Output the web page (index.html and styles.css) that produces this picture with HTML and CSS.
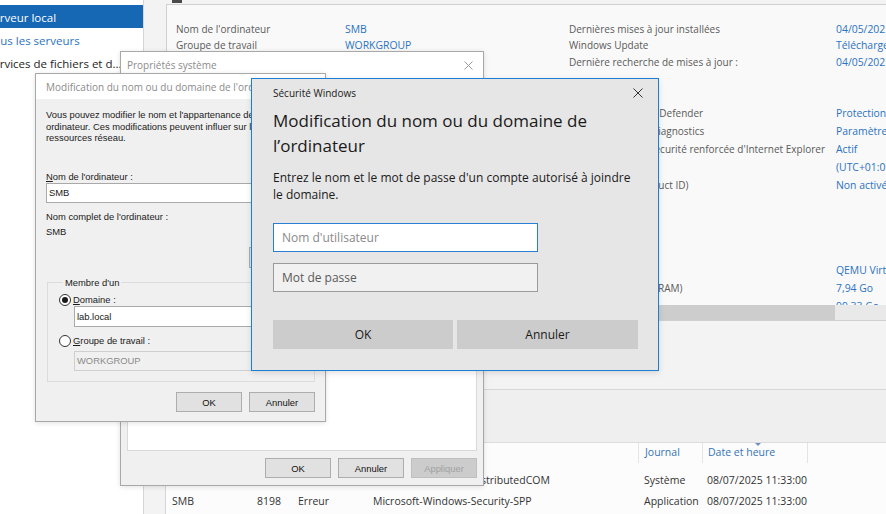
FILE: index.html
```html
<!DOCTYPE html>
<html lang="fr">
<head>
<meta charset="utf-8">
<title>Gestionnaire de serveur</title>
<link rel="stylesheet" href="styles.css">
</head>
<body>
<div class="desktop">
  <div class="sm">
    <nav class="nav">
      <div class="nav-item active">Serveur local</div>
      <div class="nav-item link">Tous les serveurs</div>
      <div class="nav-item">Services de fichiers et d...</div>
    </nav>
    <div class="main">
      <div class="topmark"></div>
      <section class="props">
        <div class="props-body">
          <div class="pgroup g1">
            <span class="lbl">Nom de l'ordinateur</span><span class="val">SMB</span><span class="lbl">Dernières mises à jour installées</span><span class="val">04/05/2025 10:12</span>
            <span class="lbl">Groupe de travail</span><span class="val">WORKGROUP</span><span class="lbl">Windows Update</span><span class="val">Télécharger les mises à jour uniquement</span>
            <span></span><span></span><span class="lbl">Dernière recherche de mises à jour :</span><span class="val">04/05/2025 10:12</span>
          </div>
          <div class="pgroup g2">
            <span class="lbl">Pare-feu Microsoft Defender</span><span class="val">Public : Actif</span><span class="lbl">Antivirus Microsoft Defender</span><span class="val">Protection en temps réel : Activée</span>
            <span class="lbl">Gestion à distance</span><span class="val">Activé</span><span class="lbl">Commentaires et diagnostics</span><span class="val">Paramètres</span>
            <span class="lbl">Bureau à distance</span><span class="val">Désactivé</span><span class="lbl">Configuration de sécurité renforcée d'Internet Explorer</span><span class="val">Actif</span>
            <span class="lbl">Association de cartes réseau</span><span class="val">Désactivé</span><span class="lbl">Fuseau horaire</span><span class="val">(UTC+01:00) Bruxelles, Copenhague, Madrid, Paris</span>
            <span class="lbl">Ethernet</span><span class="val">Adresse IPv4 attribuée par DHCP</span><span class="lbl">ID de produit (Product ID)</span><span class="val">Non activé</span>
          </div>
          <div class="pgroup g3">
            <span class="lbl">Système d'exploitation</span><span class="val">Microsoft Windows Server 2022</span><span class="lbl">Processeurs</span><span class="val">QEMU Virtual CPU version 2.5+</span>
            <span class="lbl">Informations sur le matériel</span><span class="val">QEMU Standard PC</span><span class="lbl">Mémoire installée (RAM)</span><span class="val">7,94 Go</span>
            <span></span><span></span><span class="lbl">Espace disque total</span><span class="val">99,33 Go</span>
          </div>
        </div>
        <div class="hscroll"><div class="hthumb"></div></div>
      </section>
      <section class="events">
        <div class="events-band"></div>
        <div class="etable">
          <div class="erow ehead">
            <span class="th first">Nom du serveur</span><span class="th num">ID</span><span class="th">Gravité</span><span class="th">Source</span><span class="th c-journal">Journal</span><span class="th c-date sorted">Date et heure</span><span class="th"></span>
          </div>
          <div class="erow">
            <span>SMB</span><span class="num">10016</span><span>Erreur</span><span>Microsoft-Windows-DistributedCOM</span><span class="c-journal">Système</span><span class="c-date">08/07/2025 11:33:00</span><span></span>
          </div>
          <div class="erow">
            <span>SMB</span><span class="num">8198</span><span>Erreur</span><span>Microsoft-Windows-Security-SPP</span><span class="c-journal">Application</span><span class="c-date">08/07/2025 11:33:00</span><span></span>
          </div>
        </div>
      </section>
    </div>
  </div>

  <!-- Propriétés système -->
  <div class="win win-props">
    <div class="tbar tbar-props">
      <span class="ttl">Propriétés système</span>
      <svg class="xicon" width="9" height="9" viewBox="0 0 9 9"><path d="M0.5 0.5L8.5 8.5M8.5 0.5L0.5 8.5" stroke="#9a9a9a" stroke-width="1" fill="none"/></svg>
    </div>
    <div class="props-wbody">
      <div class="tabpage"></div>
      <div class="cbtnrow">
        <button class="cbtn">OK</button>
        <button class="cbtn">Annuler</button>
        <button class="cbtn disabled">Appliquer</button>
      </div>
    </div>
  </div>

  <!-- Modification du nom ou du domaine -->
  <div class="win win-rename">
    <div class="tbar tbar-rename">
      <span class="ttl">Modification du nom ou du domaine de l'ordinateur</span>
    </div>
    <div class="rename-body">
      <p class="cpara">Vous pouvez modifier le nom et l'appartenance de cet<br>ordinateur. Ces modifications peuvent influer sur l'accès aux<br>ressources réseau.</p>
      <div class="clabel lbl-name"><u>N</u>om de l'ordinateur :</div>
      <div class="cinput in-name">SMB</div>
      <div class="clabel lbl-full">Nom complet de l'ordinateur :</div>
      <div class="clabel lbl-smb">SMB</div>
      <button class="cbtn btn-more">Autres...</button>
      <fieldset class="member">
        <legend>Membre d'un</legend>
        <div class="radio-row"><span class="radio on"></span><span class="clabel"><u>D</u>omaine :</span></div>
        <div class="cinput in-domain">lab.local</div>
        <div class="radio-row row2"><span class="radio"></span><span class="clabel"><u>G</u>roupe de travail :</span></div>
        <div class="cinput in-wg disabled">WORKGROUP</div>
      </fieldset>
      <div class="cbtnrow rename-btns">
        <button class="cbtn">OK</button>
        <button class="cbtn">Annuler</button>
      </div>
    </div>
  </div>

  <!-- Sécurité Windows -->
  <div class="win win-sec">
    <div class="sec-title">
      <span>Sécurité Windows</span>
      <svg class="xicon sec-x" width="10" height="10" viewBox="0 0 10 10"><path d="M0.5 0.5L9.5 9.5M9.5 0.5L0.5 9.5" stroke="#333" stroke-width="1" fill="none"/></svg>
    </div>
    <h1 class="sec-head">Modification du nom ou du domaine de<br>l’ordinateur</h1>
    <p class="sec-para">Entrez le nom et le mot de passe d'un compte autorisé à joindre<br>le domaine.</p>
    <div class="sec-input focus">Nom d'utilisateur</div>
    <div class="sec-input pwd">Mot de passe</div>
    <div class="sec-btns">
      <button class="sbtn ok">OK</button>
      <button class="sbtn cancel">Annuler</button>
    </div>
  </div>
</div>
</body>
</html>
```

FILE: styles.css
```css
* { box-sizing: border-box; }
html, body { margin: 0; padding: 0; }
body {
  width: 886px;
  height: 514px;
  overflow: hidden;
  background: #f3f3f3;
  font-family: "Open Sans", "Noto Sans", sans-serif;
}
.desktop { position: relative; width: 886px; height: 514px; overflow: hidden; }

/* ---------- Server manager background ---------- */
.sm { display: flex; height: 514px; }
.nav {
  width: 144px;
  flex: none;
  background: #fff;
  border-right: 1px solid #d6d6d6;
  padding-top: 5px;
  overflow: hidden;
}
.nav-item {
  height: 23px;
  padding-top: 2.5px;
  line-height: 20.5px;
  font-size: 11.5px;
  color: #1e1e1e;
  white-space: nowrap;
  margin-left: -13px;
}
.nav-item.active { background: #1667b4; color: #fff; }
.nav-item.link { color: #2d73be; }

.main { flex: 1; min-width: 0; overflow: hidden; background: #f3f3f3; }
.topmark { width: 10px; height: 3px; margin-left: 28px; background: #4a4a4a; }

.props {
  margin: 1px 0 0 22px;
  width: 900px;
  border: 1px solid #cfcfcf;
  background: #f9f9f9;
}
.props-body { height: 300px; overflow: hidden; padding: 15.5px 0 0 9px; }
.pgroup {
  display: grid;
  grid-template-columns: 169px 224px 267px 400px;
  font-size: 10px;
}
.g1 { grid-auto-rows: 16.5px; line-height: 16.5px; }
.g2, .g3 { grid-auto-rows: 18px; line-height: 18px; }
.g2 { margin-top: 34px; }
.g3 { margin-top: 67px; }
.lbl { color: #5a5a5a; white-space: nowrap; }
.val { color: #2b73c2; white-space: nowrap; font-size: 10.4px; }

.hscroll { height: 15px; background: #e9e9e9; }
.hthumb { width: 668px; height: 15px; background: #cdcdcd; }

.events { margin: 68px 0 0 21px; }
.events-band {
  height: 54px;
  background: #efefef;
  border-top: 1px solid #d6d6d6;
  border-bottom: 1px solid #dcdcdc;
}
.etable {
  height: 80px;
  background: #fcfcfc;
  border-left: 1px solid #d6d6d6;
  padding-left: 6px;
  font-size: 10.5px;
  color: #333;
}
.erow {
  display: grid;
  grid-template-columns: 68px 58px 75px 265px 64px 105px 1fr;
  height: 21px;
  line-height: 21px;
  white-space: nowrap;
}
.erow .num { text-align: right; padding-right: 17px; }
.erow .c-journal { padding-left: 6px; }
.erow .c-date { padding-left: 5px; }
.ehead { height: 20px; line-height: 19px; margin-bottom: 7px; }
.th { color: #3574b8; border-left: 1px solid #e4e4e4; }
.th.first { border-left: none; }
.th.c-journal { padding-left: 6px; }
.th.c-date { padding-left: 5px; position: relative; }
.th.sorted::before {
  content: "";
  position: absolute;
  left: 52px;
  top: 0;
  border-left: 3px solid transparent;
  border-right: 3px solid transparent;
  border-top: 3px solid #6e8fbf;
}

/* ---------- Windows ---------- */
.win { position: absolute; display: flex; flex-direction: column; overflow: hidden; }
.tbar {
  flex: none;
  background: #fff;
  display: flex;
  align-items: center;
  justify-content: space-between;
  font-size: 10px;
  color: #8c8c8c;
  white-space: nowrap;
}
.xicon { display: block; flex: none; }

/* Propriétés système */
.win-props {
  left: 120px;
  top: 51px;
  width: 364px;
  height: 435px;
  border: 1px solid #a8a8a8;
  background: #f0f0f0;
  box-shadow: 0 1px 5px rgba(0, 0, 0, 0.12);
}
.tbar-props { height: 26px; padding: 0 10px 0 6px; }
.props-wbody {
  flex: 1;
  display: flex;
  flex-direction: column;
  padding: 22px 6px 7px 6px;
}
.tabpage { flex: 1; background: #fff; border: 1px solid #d9d9d9; }

.cbtnrow { display: flex; justify-content: flex-end; gap: 7px; margin-top: 7px; }
.cbtn {
  width: 66px;
  height: 20px;
  margin: 0;
  padding: 0;
  background: #e1e1e1;
  border: 1px solid #adadad;
  border-radius: 0;
  font-family: "Liberation Sans", Arial, sans-serif;
  font-size: 9.4px;
  color: #111;
}
.cbtn.disabled { background: #cccccc; border-color: #bfbfbf; color: #a0a0a0; }

/* Modification du nom */
.win-rename {
  left: 35px;
  top: 73px;
  width: 291px;
  height: 349px;
  border: 1px solid #a8a8a8;
  background: #f0f0f0;
  box-shadow: 0 1px 5px rgba(0, 0, 0, 0.12);
}
.tbar-rename { height: 25px; padding-left: 10px; }
.rename-body {
  flex: 1;
  display: flex;
  flex-direction: column;
  padding: 10px 10px 0 10px;
  font-family: "Liberation Sans", Arial, sans-serif;
  font-size: 9.4px;
  line-height: 11.5px;
  color: #1a1a1a;
}
.cpara { margin: 0; white-space: nowrap; }
.clabel { white-space: nowrap; }
.lbl-name { margin-top: 27px; }
.cinput {
  height: 20px;
  line-height: 18px;
  background: #fff;
  border: 1px solid #a9a9a9;
  padding-left: 2px;
  white-space: nowrap;
}
.in-name { margin-top: 1px; }
.lbl-full { margin-top: 8px; }
.lbl-smb { margin-top: 3.5px; }
.btn-more { align-self: flex-end; height: 21px; margin-top: 9px; }

.member {
  margin: 9.5px 0 0 1px;
  padding: 5.5px 9px 10px 11px;
  border: 1px solid #dcdcdc;
  min-width: 0;
}
.member legend { padding: 0 2px; margin-left: 4px; line-height: 11.5px; }
.radio-row { display: flex; align-items: center; gap: 2px; height: 12px; }
.radio-row.row2 { margin-top: 8px; }
.radio {
  width: 12px;
  height: 12px;
  border-radius: 50%;
  border: 1px solid #333;
  background: #fff;
  display: flex;
  align-items: center;
  justify-content: center;
  flex: none;
}
.radio.on::after {
  content: "";
  width: 6px;
  height: 6px;
  border-radius: 50%;
  background: #1a1a1a;
}
.in-domain { margin-left: 15px; height: 21px; line-height: 19px; }
.in-wg { margin: 4px 0 0 15px; }
.cinput.disabled { background: #f0f0f0; border-color: #cfcfcf; color: #8a8a8a; }
.rename-btns { margin-top: 10px; }

/* Sécurité Windows */
.win-sec {
  left: 251px;
  top: 78px;
  width: 408px;
  height: 293px;
  border: 1px solid #1b7fd1;
  background: #e6e6e6;
  padding: 0 20px 0 21px;
  color: #1a1a1a;
  box-shadow: 0 2px 6px rgba(0, 0, 0, 0.12);
}
.sec-title {
  height: 28px;
  flex: none;
  display: flex;
  align-items: center;
  justify-content: space-between;
  font-size: 10px;
  white-space: nowrap;
}
.sec-x { margin-right: -5px; }
.sec-head {
  margin: 0.5px 0 0 0;
  font-size: 17px;
  font-weight: 400;
  line-height: 25px;
  white-space: nowrap;
}
.sec-para {
  margin: 11px 0 0 0;
  font-size: 12px;
  line-height: 17px;
  white-space: nowrap;
}
.sec-input {
  width: 265px;
  height: 29px;
  line-height: 27px;
  padding-left: 8px;
  font-size: 12px;
  white-space: nowrap;
  flex: none;
}
.sec-input.focus { margin-top: 20px; background: #fff; border: 1px solid #2a7fd4; color: #8a8a8a; }
.sec-input.pwd { margin-top: 11px; background: #f1f1f1; border: 1px solid #9a9a9a; color: #5a5a5a; }
.sec-btns { display: flex; gap: 4px; margin-top: 28px; }
.sbtn {
  height: 29px;
  margin: 0;
  padding: 0;
  border: none;
  border-radius: 0;
  background: #cccccc;
  font-family: "Open Sans", "Noto Sans", sans-serif;
  font-size: 12px;
  color: #1a1a1a;
}
.sbtn.ok { width: 180px; }
.sbtn.cancel { width: 181px; }
```
